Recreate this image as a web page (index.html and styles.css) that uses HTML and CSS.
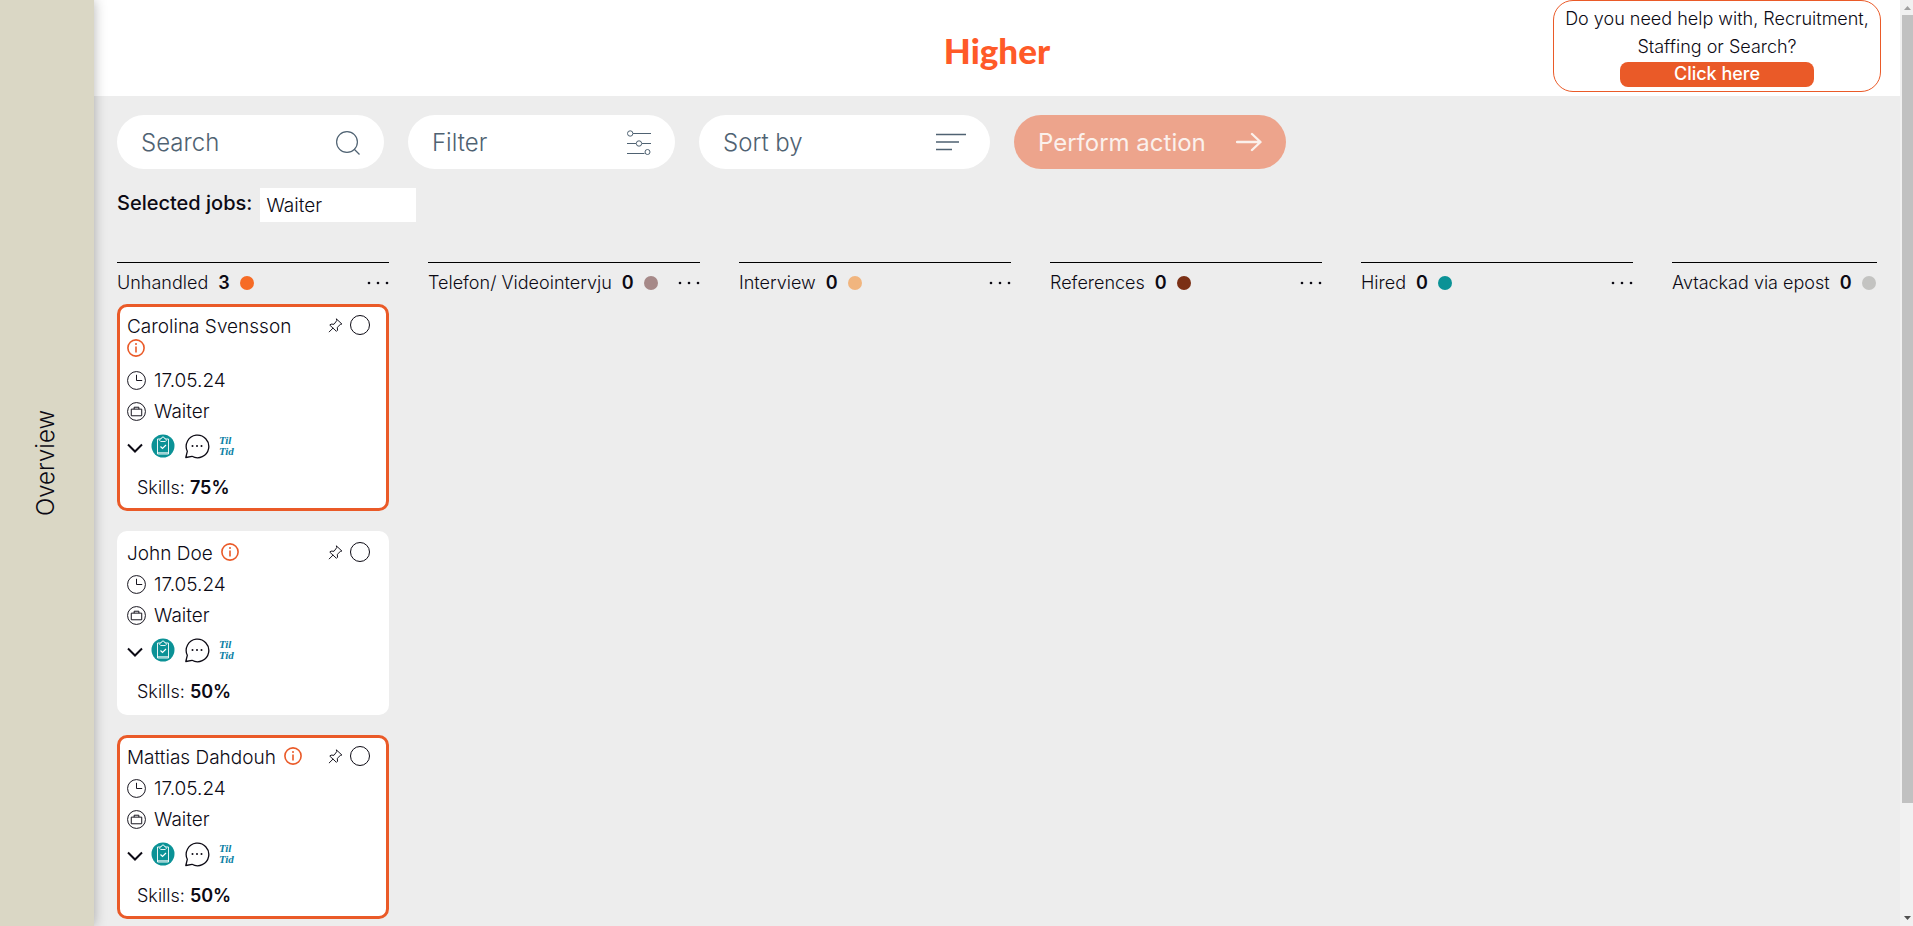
FILE: index.html
```html
<!DOCTYPE html>
<html lang="en">
<head>
    <meta charset="UTF-8">
    <meta name="viewport" content="width=device-width, initial-scale=1.0">
    <title>Higher - Candidates</title>
    <link rel="stylesheet" href="styles.css">
</head>
<body>
    <svg class="sprite" aria-hidden="true">
        <symbol id="icon-info" viewBox="0 0 18 18">
            <circle cx="9" cy="9" r="8.100" fill="none" stroke="currentColor" stroke-width="1.600"/>
            <circle cx="9" cy="5" r="1" fill="currentColor"/>
            <path d="M9 7.500v6" stroke="currentColor" stroke-width="1.600"/>
        </symbol>
        <symbol id="icon-pin" viewBox="0 0 16 16">
            <path d="M9.2 1.2l5.6 5.2-1.7.5-3.2 3.1.3 3-1.2 1.2L1.9 7.6l1.3-1.1 3.2.2 2.7-3.6zM5.3 10.8l-4 4" fill="none" stroke="currentColor" stroke-width="1" stroke-linejoin="round" stroke-linecap="round"/>
        </symbol>
        <symbol id="icon-clock" viewBox="0 0 20 20">
            <circle cx="10" cy="10" r="9.400" fill="none" stroke="currentColor"/>
            <path d="M10 4v6h6" fill="none" stroke="currentColor"/>
        </symbol>
        <symbol id="icon-case" viewBox="0 0 20 20">
            <circle cx="10" cy="10" r="9.400" fill="none" stroke="currentColor"/>
            <path d="M4.500 7.500h11v7h-11zM7.500 7.500V5.500h5v2" fill="none" stroke="currentColor"/>
        </symbol>
        <symbol id="icon-chevron" viewBox="0 0 16 16">
            <path d="M1 4.500l7 7 7-7" fill="none" stroke="currentColor" stroke-width="2"/>
        </symbol>
        <symbol id="icon-clipboard" viewBox="0 0 24 24">
            <circle cx="12" cy="12" r="11.500" fill="#0b9296"/>
            <path d="M9 5H6.500v15h11V5H15M9.500 4.500h1a1.500 1.500 0 0 1 3 0h1l.8 2-1 1h-4.600l-1-1z" fill="none" stroke="#fff" stroke-width=".9"/>
            <path d="M6.500 18.800h11" stroke="#fff" stroke-width=".9"/>
            <path d="M9.500 12.500l2 2 3.500-3.500" fill="none" stroke="#fff" stroke-width="1.200"/>
        </symbol>
        <symbol id="icon-chat" viewBox="0 0 26 26">
            <path d="M3.300 18.300A11.300 11.300 0 1 1 8 23.300L1.800 24.500z" fill="none" stroke="currentColor" stroke-width="1.300" stroke-linejoin="round"/>
            <circle cx="8.500" cy="13" r="1" fill="currentColor"/>
            <circle cx="13" cy="13" r="1" fill="currentColor"/>
            <circle cx="17.500" cy="13" r="1" fill="currentColor"/>
        </symbol>
        <symbol id="icon-dots" viewBox="0 0 22 6">
            <circle cx="2" cy="3" r="1.300" fill="currentColor"/>
            <circle cx="11" cy="3" r="1.300" fill="currentColor"/>
            <circle cx="20" cy="3" r="1.300" fill="currentColor"/>
        </symbol>
    </svg>

    <div class="app">
        <nav class="sidebar">
            <a class="sidebar-link" href="#">Overview</a>
        </nav>

        <div class="page">
            <header class="header">
                <a class="logo" href="#">Higher</a>
                <div class="promo">
                    <p>Do you need help with, Recruitment, Staffing or Search?</p>
                    <button class="promo-button" type="button">Click here</button>
                </div>
            </header>

            <main class="content">
                <div class="toolbar">
                    <label class="pill">
                        <input type="text" placeholder="Search" aria-label="Search">
                        <svg width="24" height="26" viewBox="0 0 24 26"><circle cx="11" cy="13" r="10.400" fill="none" stroke="currentColor" stroke-width="1.200"/><path d="M18 20l5.500 5.500" stroke="currentColor" stroke-width="1.200"/></svg>
                    </label>
                    <button class="pill" type="button">
                        <span>Filter</span>
                        <svg width="24" height="26" viewBox="0 0 24 26"><path d="M6 4.500h18M0 14.500h9M15 14.500h9M0 24.500h17.500" stroke="currentColor" stroke-width="1.200"/><g fill="none" stroke="currentColor"><circle cx="3.200" cy="4.500" r="2.700"/><circle cx="12" cy="14.500" r="2.700"/><circle cx="20.500" cy="23" r="2.500"/></g></svg>
                    </button>
                    <label class="pill pill-sort">
                        <select aria-label="Sort by">
                            <option>Sort by</option>
                        </select>
                        <svg width="30" height="18" viewBox="0 0 30 18"><path d="M0 1.500h30M0 9h23M0 16.500h16" stroke="currentColor" stroke-width="1.500"/></svg>
                    </label>
                    <button class="pill pill-action" type="button">
                        <span>Perform action</span>
                        <svg width="26" height="20" viewBox="0 0 26 20"><path d="M1 10h23M16 2l8.500 8-8.500 8" fill="none" stroke="currentColor" stroke-width="2.400" stroke-linecap="round" stroke-linejoin="round"/></svg>
                    </button>
                </div>

                <div class="jobs">
                    <label for="jobs">Selected jobs:</label>
                    <input id="jobs" type="text" value="Waiter">
                </div>

                <div class="board">
                    <section class="column">
                        <header class="column-head">
                            <h2>Unhandled</h2><strong>3</strong><span class="dot dot-orange"></span>
                            <button class="icon-button" type="button" aria-label="Options"><svg width="22" height="6"><use href="#icon-dots"/></svg></button>
                        </header>

                        <article class="card card-new">
                            <div class="card-top">
                                <div class="name"><span>Carolina Svensson</span> <svg width="18" height="18"><use href="#icon-info"/></svg></div>
                                <div class="card-actions">
                                    <button class="icon-button" type="button" aria-label="Pin"><svg width="15" height="15"><use href="#icon-pin"/></svg></button>
                                    <input type="checkbox" aria-label="Select Carolina Svensson">
                                </div>
                            </div>
                            <div class="row"><svg width="19" height="19"><use href="#icon-clock"/></svg>17.05.24</div>
                            <div class="row"><svg width="19" height="19"><use href="#icon-case"/></svg>Waiter</div>
                            <div class="tools">
                                <button class="icon-button chevron" type="button" aria-label="Expand"><svg width="16" height="16"><use href="#icon-chevron"/></svg></button>
                                <svg width="24" height="24"><use href="#icon-clipboard"/></svg>
                                <svg width="26" height="26"><use href="#icon-chat"/></svg>
                                <span class="tiltid">Til<br>Tid</span>
                            </div>
                            <p class="skills">Skills: <strong>75%</strong></p>
                        </article>

                        <article class="card">
                            <div class="card-top">
                                <div class="name"><span>John Doe</span> <svg width="18" height="18"><use href="#icon-info"/></svg></div>
                                <div class="card-actions">
                                    <button class="icon-button" type="button" aria-label="Pin"><svg width="15" height="15"><use href="#icon-pin"/></svg></button>
                                    <input type="checkbox" aria-label="Select John Doe">
                                </div>
                            </div>
                            <div class="row"><svg width="19" height="19"><use href="#icon-clock"/></svg>17.05.24</div>
                            <div class="row"><svg width="19" height="19"><use href="#icon-case"/></svg>Waiter</div>
                            <div class="tools">
                                <button class="icon-button chevron" type="button" aria-label="Expand"><svg width="16" height="16"><use href="#icon-chevron"/></svg></button>
                                <svg width="24" height="24"><use href="#icon-clipboard"/></svg>
                                <svg width="26" height="26"><use href="#icon-chat"/></svg>
                                <span class="tiltid">Til<br>Tid</span>
                            </div>
                            <p class="skills">Skills: <strong>50%</strong></p>
                        </article>

                        <article class="card card-new">
                            <div class="card-top">
                                <div class="name"><span>Mattias Dahdouh</span> <svg width="18" height="18"><use href="#icon-info"/></svg></div>
                                <div class="card-actions">
                                    <button class="icon-button" type="button" aria-label="Pin"><svg width="15" height="15"><use href="#icon-pin"/></svg></button>
                                    <input type="checkbox" aria-label="Select Mattias Dahdouh">
                                </div>
                            </div>
                            <div class="row"><svg width="19" height="19"><use href="#icon-clock"/></svg>17.05.24</div>
                            <div class="row"><svg width="19" height="19"><use href="#icon-case"/></svg>Waiter</div>
                            <div class="tools">
                                <button class="icon-button chevron" type="button" aria-label="Expand"><svg width="16" height="16"><use href="#icon-chevron"/></svg></button>
                                <svg width="24" height="24"><use href="#icon-clipboard"/></svg>
                                <svg width="26" height="26"><use href="#icon-chat"/></svg>
                                <span class="tiltid">Til<br>Tid</span>
                            </div>
                            <p class="skills">Skills: <strong>50%</strong></p>
                        </article>
                    </section>

                    <section class="column">
                        <header class="column-head">
                            <h2>Telefon/ Videointervju</h2><strong>0</strong><span class="dot dot-mauve"></span>
                            <button class="icon-button" type="button" aria-label="Options"><svg width="22" height="6"><use href="#icon-dots"/></svg></button>
                        </header>
                    </section>
                    <section class="column">
                        <header class="column-head">
                            <h2>Interview</h2><strong>0</strong><span class="dot dot-sand"></span>
                            <button class="icon-button" type="button" aria-label="Options"><svg width="22" height="6"><use href="#icon-dots"/></svg></button>
                        </header>
                    </section>
                    <section class="column">
                        <header class="column-head">
                            <h2>References</h2><strong>0</strong><span class="dot dot-brown"></span>
                            <button class="icon-button" type="button" aria-label="Options"><svg width="22" height="6"><use href="#icon-dots"/></svg></button>
                        </header>
                    </section>
                    <section class="column">
                        <header class="column-head">
                            <h2>Hired</h2><strong>0</strong><span class="dot dot-teal"></span>
                            <button class="icon-button" type="button" aria-label="Options"><svg width="22" height="6"><use href="#icon-dots"/></svg></button>
                        </header>
                    </section>
                    <section class="column">
                        <header class="column-head">
                            <h2>Avtackad via epost</h2><strong>0</strong><span class="dot dot-gray"></span>
                        </header>
                    </section>
                </div>
            </main>
        </div>

        <div class="scrollbar" aria-hidden="true">
            <svg width="11" height="15" viewBox="0 0 11 15"><path d="M2 10l3.500-4L9 10z" fill="#a0a0a0"/></svg>
            <div class="scrollbar-track"><div class="scrollbar-thumb"></div></div>
            <svg width="11" height="15" viewBox="0 0 11 15"><path d="M2 5l3.500 4L9 5z" fill="#505050"/></svg>
        </div>
    </div>
</body>
</html>
```

FILE: styles.css
```css
* {
    box-sizing: border-box;
}

body {
    margin: 0;
    background: #ededed;
    color: #0c0a14;
    font-family: Inter, "Liberation Sans", sans-serif;
    font-size: 19px;
    font-weight: 300;
}

h2,
p {
    margin: 0;
    font-weight: inherit;
}

button,
input,
select {
    border: none;
    padding: 0;
    background: none;
    color: inherit;
    font: inherit;
    outline: none;
}

button {
    cursor: pointer;
}

a {
    color: inherit;
    text-decoration: none;
}

svg {
    display: block;
    flex: none;
}

strong {
    font-weight: 600;
}

.sprite {
    display: none;
}

.app {
    display: flex;
    height: 100vh;
}

.sidebar {
    display: flex;
    flex: none;
    align-items: center;
    justify-content: center;
    width: 94px;
    padding-right: 4px;
    background: #dad7c5;
    box-shadow: 0 0 12px rgba(0, 0, 0, 0.3);
    z-index: 1;
}

.sidebar-link {
    writing-mode: vertical-rl;
    transform: rotate(180deg);
    font-size: 24px;
}

.page {
    flex: 1;
    min-width: 0;
    overflow: hidden;
}

.header {
    display: grid;
    grid-template-columns: 1fr auto 1fr;
    height: 96px;
    background: #fff;
}

.logo {
    grid-column: 2;
    align-self: center;
    padding-top: 4px;
    color: #ff5a28;
    font-family: Lato, sans-serif;
    font-size: 35px;
    font-weight: 900;
}

.promo {
    justify-self: end;
    width: 328px;
    height: 92px;
    margin-right: 19px;
    padding-top: 4px;
    border: 1px solid #ea5a28;
    border-radius: 20px;
    font-size: 18px;
    line-height: 28px;
    text-align: center;
}

.promo-button {
    display: block;
    width: 194px;
    margin: 1px auto 0;
    padding-bottom: 1px;
    border-radius: 8px;
    background: #ea5a28;
    color: #fff;
    font-weight: 500;
    line-height: 24px;
}

.content {
    padding: 19px 23px 0;
}

.toolbar {
    display: flex;
    gap: 24px;
}

.pill {
    display: flex;
    align-items: center;
    justify-content: space-between;
    width: 267px;
    height: 54px;
    padding: 0 24px;
    border-radius: 27px;
    background: #fff;
    color: #4f6272;
    font-size: 24px;
}

.pill input,
.pill select {
    flex: 1;
    min-width: 0;
    appearance: none;
}

.pill input::placeholder {
    color: inherit;
    opacity: 1;
}

.pill-sort {
    width: 291px;
}

.pill-action {
    width: 272px;
    background: #eda48c;
    color: #fbf1ec;
    font-weight: 400;
}

.jobs {
    display: flex;
    gap: 8px;
    margin-top: 19px;
    line-height: 30px;
}

.jobs label {
    font-size: 20px;
    font-weight: 500;
}

.jobs input {
    width: 156px;
    height: 34px;
    padding: 0 6px;
    background: #fff;
}

.board {
    display: flex;
    gap: 39px;
    margin-top: 40px;
    overflow: hidden;
}

.column {
    flex: none;
    width: 272px;
}

.column-head {
    display: flex;
    align-items: center;
    gap: 10px;
    height: 42px;
    padding-bottom: 2px;
    border-top: 1px solid #000;
    font-size: 18px;
    white-space: nowrap;
}

.column-head h2 {
    font-size: 18px;
}

.column-head .icon-button {
    margin-left: auto;
}

.dot {
    width: 14px;
    height: 14px;
    border-radius: 50%;
}

.dot-orange {
    background: #f66b25;
}

.dot-mauve {
    background: #a68988;
}

.dot-sand {
    background: #f1b57e;
}

.dot-brown {
    background: #7b3015;
}

.dot-teal {
    background: #0b9296;
}

.dot-gray {
    background: #c3c3c1;
}

.card {
    margin-bottom: 20px;
    padding: 8px 16px 9px 7px;
    border: 3px solid transparent;
    border-radius: 10px;
    background: #fff;
    line-height: 23px;
}

.card-new {
    border-color: #ea5a28;
}

.card-top {
    display: flex;
    align-items: flex-start;
    justify-content: space-between;
}

.name {
    display: flex;
    flex-wrap: wrap;
    align-items: center;
    column-gap: 8px;
    width: 184px;
}

.name svg {
    color: #ea5a28;
    margin: 1px 0 4px;
}

.card-actions {
    display: flex;
    align-items: center;
    gap: 7px;
}

.card-actions input {
    width: 20px;
    height: 20px;
    margin: 0;
    border: 1px solid #0c0a14;
    border-radius: 50%;
    appearance: none;
}

.row {
    display: flex;
    align-items: center;
    gap: 8px;
    margin-top: 8px;
}

.tools {
    display: flex;
    align-items: center;
    height: 28px;
    margin-top: 9px;
}

.tools .chevron {
    margin: 4px 8px 0 0;
}

.tools .icon-button + svg {
    margin-right: 9px;
}

.tiltid {
    margin-left: 9px;
    color: #0b7fa5;
    font-family: "Liberation Serif", serif;
    font-size: 11px;
    font-style: italic;
    font-weight: 700;
    line-height: 11px;
}

.skills {
    margin-top: 16px;
    padding-left: 10px;
    font-size: 18px;
}

.scrollbar {
    display: flex;
    flex: none;
    flex-direction: column;
    width: 13px;
    padding-left: 2px;
    background: #f1f1f1;
}

.scrollbar-track {
    flex: 1;
}

.scrollbar-thumb {
    height: 88%;
    background: #c1c1c1;
}
```
